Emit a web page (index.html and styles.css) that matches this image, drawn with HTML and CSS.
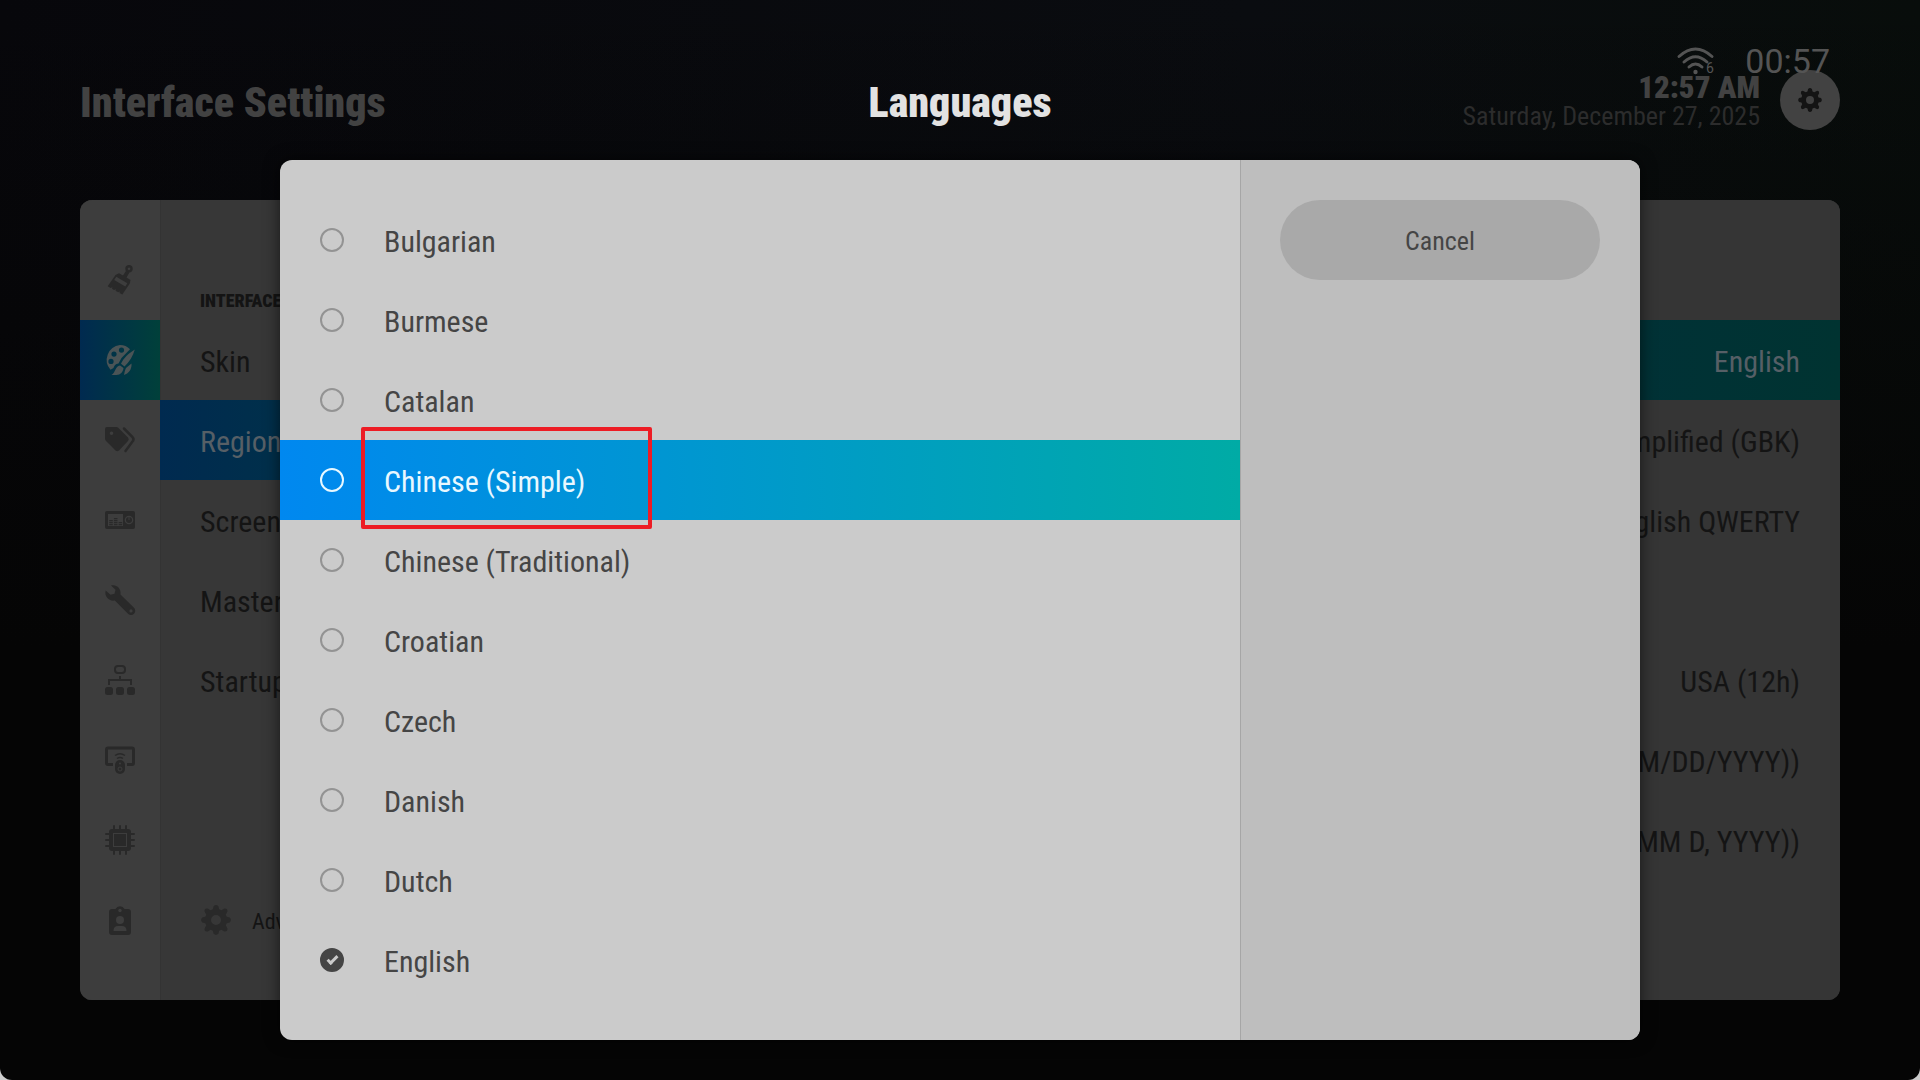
FILE: index.html
```
<!DOCTYPE html>
<html lang="en">
<head>
    <meta charset="UTF-8">
    <meta name="viewport" content="width=device-width, initial-scale=1.0">
    <title>Interface Settings</title>
    <link rel="stylesheet" href="styles.css">
</head>
<body>
    <div class="screen">
        <header class="topbar">
            <h1 class="page-title">Interface Settings</h1>
            <div class="clock">
                <div class="clock-time">12:57 AM</div>
                <div class="clock-date">Saturday, December 27, 2025</div>
            </div>
            <button class="settings-btn" aria-label="Settings">
                <svg viewBox="0 0 30 30" width="24" height="24"><use href="#gear"/></svg>
            </button>
        </header>

        <!-- system status bar, drawn over the header -->
        <div class="status">
            <svg class="wifi" viewBox="0 0 38 28" width="38" height="28">
                <g fill="none" stroke="currentColor" stroke-width="3" stroke-linecap="round">
                    <path d="M2 9.500Q18.500-5.500 35 9.500"/>
                    <path d="M7 15Q18.500 4.500 30 15"/>
                    <path d="M12 20Q18.500 14 25 20"/>
                </g>
                <circle cx="18.500" cy="25" r="2.200" fill="currentColor"/>
                <text x="29" y="26" font-size="14" fill="currentColor">6</text>
            </svg>
            <span class="status-time">00:57</span>
        </div>

        <div class="panel">
            <nav class="sidebar">
                <button class="side-item" aria-label="Skin">
                    <svg viewBox="0 0 30 30" width="30" height="30">
                        <circle cx="24" cy="3.800" r="2.500" fill="none" stroke="currentColor" stroke-width="2.400"/>
                        <path fill="currentColor" d="M21.200 5.500L24.500 7.400 21.500 12.500 25.500 15 24.800 18.500 17.300 29.500 14.500 28 15 26.500 13.200 27.300 10.500 25.800 11 24.300 9 25 7 23.800 7.500 22.300 5.500 23 2.700 21.300 10.500 10 14 8.200 18 10.500z"/>
                        <path class="cutout" d="M11.300 11.800L22.300 18.200 20.300 21.500 9.200 15z"/>
                    </svg>
                </button>
                <button class="side-item active" aria-label="Interface">
                    <svg viewBox="0 0 30 30" width="30" height="30">
                        <path fill="currentColor" fill-rule="evenodd" d="M15 0c4 0 7.500 1.500 10 4.300L16.500 13l-3 5.500c-3.500.5-3.800 2-5 4.500l-3 1.800A15 15 0 0 1 15 0zM9 6.500a2.600 2.600 0 1 0 0 5.200 2.600 2.600 0 0 0 0-5.200zm7.500-4a2.600 2.600 0 1 0 0 5.200 2.600 2.600 0 0 0 0-5.200zM6 13.800a2.600 2.600 0 1 0 0 5.200 2.600 2.600 0 0 0 0-5.200z"/>
                        <path fill="currentColor" d="M29.800 4.500C28 11 24.500 17 19.500 21.500l-3.500-2.700C18.500 13 24 8 29.800 4.500zM15 20.500l3.500 2.500c-.5 4-3 7-7 7H6.500c4-2 3.500-9 8.500-9.500zM26.500 18.500c.5 6-3 10-7.500 11.500.5-2 .8-5 2-7z"/>
                    </svg>
                </button>
                <button class="side-item" aria-label="Media">
                    <svg viewBox="0 0 30 30" width="30" height="30">
                        <path fill="currentColor" fill-rule="evenodd" d="M2 2h9.500l1.500.6L23 12.500q1.500 1.800 0 3.500L14 25.500q-1.700 1.500-3.500 0L.6 15.500 0 14V4q0-2 2-2zm4.500 4.500a1.800 1.800 0 1 0 0 3.600 1.800 1.800 0 0 0 0-3.600z"/>
                        <path fill="none" stroke="currentColor" stroke-width="2.500" stroke-linecap="round" d="M19 3.500l8.500 8.500q2 2.300 0 4.500L20.500 26"/>
                    </svg>
                </button>
                <button class="side-item" aria-label="Resources">
                    <svg viewBox="0 0 30 30" width="30" height="30">
                        <rect y="6" width="30" height="18" rx="2" fill="currentColor"/>
                        <path class="cutout" d="M3 9h15v12H3z"/>
                        <circle cx="24" cy="15" r="4.300" class="cutout"/>
                        <circle cx="24" cy="15" r="3" fill="currentColor"/>
                        <path class="cutout-line" d="M24 12v3"/>
                        <path fill="none" stroke="currentColor" stroke-width="3.500" stroke-dasharray="1.300 .7" d="M6 20.300v-5.300M10.700 20.300v-8M15.400 20.300v-3.300"/>
                    </svg>
                </button>
                <button class="side-item" aria-label="Tools">
                    <svg viewBox="0 0 30 30" width="30" height="30">
                        <path fill="currentColor" fill-rule="evenodd" d="M.7 5.500l4.800 4.300 4-1 1-4L6 .6C11-1 16.500 3 15.500 9.500L29 22.800a4.200 4.200 0 0 1-6 6L9.800 15.500C4 16.500-1 11.500.7 5.500zM26 24.300a1.600 1.600 0 1 0 0 3.200 1.600 1.600 0 0 0 0-3.200z"/>
                    </svg>
                </button>
                <button class="side-item" aria-label="Network">
                    <svg viewBox="0 0 30 30" width="30" height="30">
                        <rect x="10" y="1" width="10" height="7" rx="3" fill="none" stroke="currentColor" stroke-width="2"/>
                        <path fill="none" stroke="currentColor" stroke-width="2" d="M15 11v4M4 20v-5h22v5"/>
                        <rect y="22" width="8" height="8" rx="2.500" fill="currentColor"/>
                        <rect x="11" y="22" width="8" height="8" rx="2.500" fill="currentColor"/>
                        <rect x="22" y="22" width="8" height="8" rx="2.500" fill="currentColor"/>
                    </svg>
                </button>
                <button class="side-item" aria-label="Remote">
                    <svg viewBox="0 0 30 30" width="30" height="30">
                        <path fill="none" stroke="currentColor" stroke-width="3" d="M8 19.500H3q-1.500 0-1.500-1.500V4.500Q1.500 3 3 3h24q1.500 0 1.500 1.500V18q0 1.500-1.500 1.500h-5"/>
                        <path fill="none" stroke="currentColor" stroke-width="1.500" d="M10 10.500q5-3.500 10 0M12 13.500q3-2 6 0"/>
                        <rect x="10" y="15" width="10" height="14" rx="5" fill="currentColor"/>
                        <circle cx="15" cy="24" r="2" fill="none" class="cutout-line"/>
                        <circle cx="15" cy="18.500" r="1" class="cutout"/>
                    </svg>
                </button>
                <button class="side-item" aria-label="System">
                    <svg viewBox="0 0 30 30" width="30" height="30">
                        <path stroke="currentColor" stroke-width="2" stroke-linecap="round" d="M9 1v28M15 1v28M21 1v28M1 9h28M1 15h28M1 21h28"/>
                        <rect x="4" y="4" width="22" height="22" rx="3" fill="currentColor"/>
                        <rect x="8.500" y="8.500" width="13" height="13" fill="none" class="cutout-line"/>
                    </svg>
                </button>
                <button class="side-item" aria-label="Profile">
                    <svg viewBox="0 0 30 30" width="30" height="30">
                        <path fill="currentColor" d="M7 4h3.500a5 5 0 0 1 9 0H23q3 0 3 3v20q0 3-3 3H7q-3 0-3-3V7q0-3 3-3z"/>
                        <circle cx="15" cy="5.500" r="1.700" class="cutout"/>
                        <circle cx="15" cy="15" r="4" class="cutout"/>
                        <path class="cutout" d="M8.500 26q0-5 4.500-5h4q4.500 0 4.500 5z"/>
                    </svg>
                </button>
            </nav>

            <section class="categories">
                <h2 class="group-title">INTERFACE</h2>
                <button class="category">Skin</button>
                <button class="category active">Regional</button>
                <button class="category">Screensaver</button>
                <button class="category">Master lock</button>
                <button class="category">Startup</button>
                <button class="level">
                    <svg viewBox="0 0 30 30" width="30" height="30">
                        <path id="gear" fill="currentColor" fill-rule="evenodd" d="M12.600 1.200Q15-1 17.400 1.200L18.200 4.300 20.300 5.200 23.400 3.600Q26.800 3.200 26.400 6.600L24.800 9.700 25.700 11.800 28.800 12.600Q31 15 28.800 17.400L25.700 18.200 24.800 20.300 26.400 23.400Q26.800 26.800 23.400 26.400L20.300 24.800 18.200 25.700 17.400 28.800Q15 31 12.600 28.800L11.800 25.700 9.700 24.800 6.600 26.400Q3.200 26.800 3.600 23.400L5.200 20.300 4.300 18.200 1.200 17.400Q-1 15 1.200 12.600L4.300 11.800 5.200 9.700 3.600 6.600Q3.200 3.200 6.600 3.600L9.700 5.200 11.800 4.300zM15 10a5 5 0 1 0 0 10 5 5 0 0 0 0-10z"/>
                    </svg>
                    <span class="name">Advanced</span>
                </button>
            </section>

            <section class="values">
                <button class="value active">English</button>
                <button class="value">Chinese Simplified (GBK)</button>
                <button class="value">English QWERTY</button>
                <button class="value"></button>
                <button class="value">USA (12h)</button>
                <button class="value">(MM/DD/YYYY))</button>
                <button class="value">(DDDD, MMMM D, YYYY))</button>
            </section>
        </div>
    </div>

    <div class="overlay">
        <h2 class="dialog-title" id="dialog-title">Languages</h2>
        <div class="dialog" role="dialog" aria-labelledby="dialog-title">
            <div class="options">
                <label class="option"><input type="radio" name="lang"><span class="name">Bulgarian</span></label>
                <label class="option"><input type="radio" name="lang"><span class="name">Burmese</span></label>
                <label class="option"><input type="radio" name="lang"><span class="name">Catalan</span></label>
                <label class="option focused"><input type="radio" name="lang"><span class="name">Chinese (Simple)</span><span class="marker"></span></label>
                <label class="option"><input type="radio" name="lang"><span class="name">Chinese (Traditional)</span></label>
                <label class="option"><input type="radio" name="lang"><span class="name">Croatian</span></label>
                <label class="option"><input type="radio" name="lang"><span class="name">Czech</span></label>
                <label class="option"><input type="radio" name="lang"><span class="name">Danish</span></label>
                <label class="option"><input type="radio" name="lang"><span class="name">Dutch</span></label>
                <label class="option"><input type="radio" name="lang" checked><span class="name">English</span></label>
            </div>
            <div class="actions">
                <button class="cancel">Cancel</button>
            </div>
        </div>
    </div>
</body>
</html>
```

FILE: styles.css
```
* {
    box-sizing: border-box;
}
body {
    margin: 0;
    min-height: 100vh;
    background: #ccc;
    color: #141414;
    font-family: "Roboto Condensed", "Liberation Sans Narrow", Roboto, sans-serif;
    font-size: 30px;
    overflow: hidden;
}
h1, h2 {
    margin: 0;
}
button {
    border: 0;
    padding: 0;
    background: none;
    color: inherit;
    font: inherit;
    cursor: pointer;
}
svg {
    display: block;
    flex: none;
    overflow: visible;
}
.name {
    padding-top: 2px;
}

/* settings window behind the dialog */
.screen {
    min-height: 100vh;
    padding: 0 80px 80px;
    display: flex;
    flex-direction: column;
    background: linear-gradient(to bottom, transparent, #050505 60%), linear-gradient(to right, #07070b, #0a0c10 65%, #080d0b);
    background-color: #050505;
    border-radius: 0 0 12px 12px;
}
.topbar {
    height: 200px;
    display: flex;
    align-items: center;
    gap: 20px;
    color: #424242;
}
.page-title {
    flex: 1;
    padding-top: 6px;
    font-size: 42px;
    font-weight: 900;
    line-height: 48px;
}
.clock {
    padding-top: 4px;
    text-align: right;
}
.clock-time {
    font-size: 31px;
    font-weight: 900;
    line-height: 28px;
}
.clock-date {
    font-size: 26px;
    line-height: 28px;
    color: #2c2c2c;
}
.settings-btn {
    width: 60px;
    height: 60px;
    border-radius: 50%;
    display: flex;
    align-items: center;
    justify-content: center;
    background: #424242;
    color: #141414;
}
.status {
    position: absolute;
    top: 42px;
    right: 90px;
    display: flex;
    align-items: center;
    gap: 30px;
    color: #545454;
    font-family: Roboto, sans-serif;
}
.status-time {
    font-size: 34px;
    font-weight: 400;
    line-height: 38px;
}
.panel {
    flex: 1;
    display: flex;
    border-radius: 12px;
    overflow: hidden;
    background: #373737;
}
.sidebar {
    width: 80px;
    padding: 40px 0;
    display: flex;
    flex-direction: column;
    background: #3d3d3d;
    box-shadow: 1px 0 #333;
}
.side-item {
    height: 80px;
    display: flex;
    align-items: center;
    justify-content: center;
    color: #292929;
}
.side-item.active {
    background: linear-gradient(to right, #002a50, #00403a);
    color: #4a5456;
}
.cutout {
    fill: #3d3d3d;
}
.cutout-line {
    stroke: #3d3d3d;
    stroke-width: 1;
}
.categories {
    width: 480px;
    padding: 82px 0 40px;
    display: flex;
    flex-direction: column;
}
.group-title {
    padding-left: 40px;
    font-size: 18px;
    font-weight: 900;
    line-height: 38px;
}
.category {
    height: 80px;
    padding: 2px 40px 0;
    text-align: left;
}
.category.active {
    background: linear-gradient(to right, #002a50, #00403a);
    color: #565f66;
}
.level {
    height: 80px;
    margin-top: auto;
    padding-left: 41px;
    display: flex;
    align-items: center;
    gap: 21px;
    font-size: 22px;
}
.level svg {
    color: #292929;
}
.values {
    flex: 1;
    padding: 120px 0 40px;
    display: flex;
    flex-direction: column;
    background: #353535;
}
.value {
    height: 80px;
    padding: 2px 40px 0;
    text-align: right;
}
.value.active {
    background: linear-gradient(to right, #002a50, #003331);
    color: #565f66;
}

/* language dialog */
.overlay {
    position: absolute;
    inset: 0;
    padding: 0 280px 40px;
    display: flex;
    flex-direction: column;
}
.dialog-title {
    height: 160px;
    padding-top: 79px;
    font-size: 42px;
    font-weight: 900;
    line-height: 48px;
    text-align: center;
    color: #e2e2e2;
}
.dialog {
    flex: 1;
    display: flex;
    border-radius: 12px;
    overflow: hidden;
    background: #cbcbcb;
    color: #454545;
    box-shadow: 0 0 16px rgba(0, 0, 0, 0.6);
}
.options {
    flex: 1;
    padding: 40px 0;
}
.option {
    position: relative;
    height: 80px;
    padding-left: 40px;
    display: flex;
    align-items: center;
    gap: 40px;
}
.option input {
    appearance: none;
    width: 24px;
    height: 24px;
    margin: 0;
    border: 2px solid #939393;
    border-radius: 50%;
    display: flex;
    align-items: center;
    justify-content: center;
}
.option input:checked {
    border-color: #454545;
    background: #454545;
}
.option input:checked::after {
    content: "";
    width: 11px;
    height: 6px;
    border-left: 3px solid #cbcbcb;
    border-bottom: 3px solid #cbcbcb;
    transform: translateY(-1px) rotate(-45deg);
}
.option.focused {
    background: linear-gradient(to right, #0088f0, #00aba5);
    color: #e8f8ff;
}
.option.focused input {
    border-color: #e8f8ff;
}
/* red frame round the focused language */
.marker {
    position: absolute;
    top: -13px;
    left: 81px;
    width: 291px;
    height: 102px;
    border: 4px solid #ed1c24;
    border-radius: 2px;
}
.option input:checked::after {
    box-sizing: border-box;
}
.actions {
    width: 400px;
    padding: 40px;
    background: #bebebe;
    box-shadow: inset 1px 0 #a6a6a6;
}
.cancel {
    width: 100%;
    height: 80px;
    padding-top: 2px;
    border-radius: 40px;
    background: #a9a9a9;
    font-size: 26px;
}
```
